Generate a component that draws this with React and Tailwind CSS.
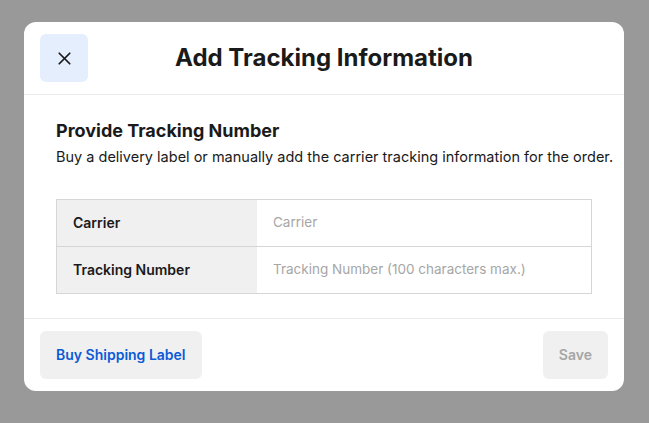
import { X } from 'lucide-react'

export default function App() {
  return (
    <div
      className="h-[423px] w-full bg-[#999999] pl-6 pt-[22px]"
      style={{ fontFamily: 'Inter, "Noto Sans", sans-serif' }}
    >
      <div className="flex w-[600px] flex-col rounded-xl bg-white">
        <div className="relative flex items-center border-b border-[#ebebeb] px-4 py-3">
          <button className="flex h-12 w-12 items-center justify-center rounded-md bg-[#e5eefd] text-[#1a1a1a]">
            <X size={21} strokeWidth={2} />
          </button>
          <h1 className="pointer-events-none absolute inset-x-0 text-center text-2xl font-bold text-[#1a1a1a]">
            Add Tracking Information
          </h1>
        </div>

        <div className="px-8 pb-6 pt-6">
          <h2 className="text-lg font-bold leading-6 text-[#1a1a1a]">Provide Tracking Number</h2>
          <p className="mt-1 whitespace-nowrap text-[14.5px] leading-5 text-[#1a1a1a]">
            Buy a delivery label or manually add the carrier tracking information for the order.
          </p>

          <div className="mt-8 border border-[#d6d6d6] text-sm">
            <div className="flex h-[47px] border-b border-[#d6d6d6]">
              <div className="flex w-[200px] items-center bg-[#f0f0f0] px-4 font-semibold text-[#1a1a1a]">
                Carrier
              </div>
              <div className="flex flex-1 items-center px-4 text-[13.5px] text-[#a6a6a6]">Carrier</div>
            </div>
            <div className="flex h-[46px]">
              <div className="flex w-[200px] items-center bg-[#f0f0f0] px-4 font-semibold text-[#1a1a1a]">
                Tracking Number
              </div>
              <div className="flex flex-1 items-center px-4 text-[13.5px] text-[#a6a6a6]">
                Tracking Number (100 characters max.)
              </div>
            </div>
          </div>
        </div>

        <div className="flex items-center justify-between border-t border-[#ebebeb] px-4 py-3">
          <button className="h-12 rounded-md bg-[#f0f0f0] px-4 text-sm font-semibold text-[#0b5ad6]">
            Buy Shipping Label
          </button>
          <button className="h-12 rounded-md bg-[#f0f0f0] px-4 text-sm font-semibold text-[#a6a6a6]">
            Save
          </button>
        </div>
      </div>
    </div>
  )
}
